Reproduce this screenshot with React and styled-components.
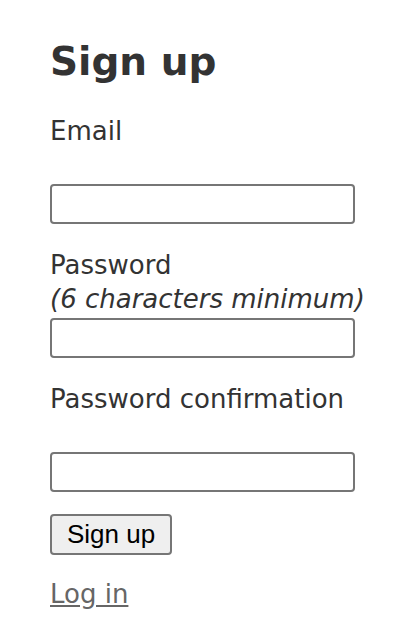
import React from "react";
import styled, { createGlobalStyle } from "styled-components";

const GlobalStyle = createGlobalStyle`
  body {
    margin: 0;
    background: #fff;
    color: #333;
    font-family: "DejaVu Sans", Verdana, sans-serif;
    font-size: 26px;
    line-height: 34px;
  }
`;

const Page = styled.div`
  padding: 39px 50px 0;
  width: 305px;
`;

const Title = styled.h1`
  margin: 0 0 30px;
  font-size: 39px;
  line-height: 45px;
  font-weight: bold;
  color: #333;
`;

const Form = styled.form`
  display: flex;
  flex-direction: column;
  gap: 24px;
`;

const Field = styled.div`
  display: flex;
  flex-direction: column;
`;

const Label = styled.label`
  display: block;
  min-height: ${(p) => (p.$lines || 2) * 34}px;
`;

const Hint = styled.em`
  display: block;
  white-space: nowrap;
`;

const Input = styled.input`
  box-sizing: border-box;
  width: 305px;
  height: 40px;
  margin-top: 2px;
  border: 2px solid #767676;
  border-radius: 4px;
  background: #fff;
  font-size: 26px;
  padding: 0 8px;
`;

const Actions = styled.div`
  margin-top: -2px;
`;

const Button = styled.button`
  box-sizing: border-box;
  height: 41px;
  padding: 0 15px;
  border: 2px solid #767676;
  border-radius: 4px;
  background: #efefef;
  color: #000;
  font-family: "Liberation Sans", Arial, sans-serif;
  font-size: 26px;
`;

const Links = styled.div`
  margin-top: 22px;
`;

const Link = styled.a`
  color: #666;
  text-decoration: underline;
`;

export default function App() {
  return (
    <Page>
      <GlobalStyle />
      <Title>Sign up</Title>
      <Form onSubmit={(e) => e.preventDefault()}>
        <Field>
          <Label htmlFor="email">Email</Label>
          <Input id="email" type="email" />
        </Field>
        <Field>
          <Label htmlFor="password">
            Password
            <Hint>(6 characters minimum)</Hint>
          </Label>
          <Input id="password" type="password" />
        </Field>
        <Field>
          <Label htmlFor="password_confirmation">Password confirmation</Label>
          <Input id="password_confirmation" type="password" />
        </Field>
        <Actions>
          <Button type="submit">Sign up</Button>
        </Actions>
      </Form>
      <Links>
        <Link href="#">Log in</Link>
      </Links>
    </Page>
  );
}
